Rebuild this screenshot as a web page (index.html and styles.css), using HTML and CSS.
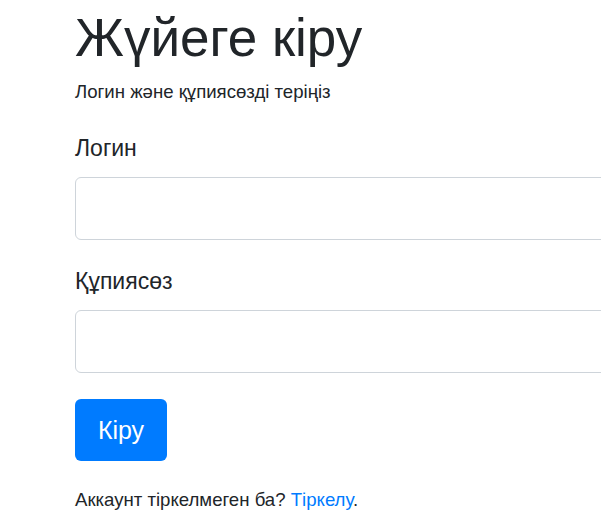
FILE: index.html
```html
<!DOCTYPE html>
<html lang="kk">
<head>
<meta charset="utf-8">
<title>Жүйеге кіру</title>
<link rel="stylesheet" href="styles.css">
</head>
<body>
<main class="login">
  <h1 class="login-title">Жүйеге кіру</h1>
  <p class="login-lead">Логин және құпиясөзді теріңіз</p>
  <form class="login-form">
    <div class="field">
      <label class="field-label" for="login">Логин</label>
      <input class="field-input" id="login" type="text">
    </div>
    <div class="field">
      <label class="field-label" for="password">Құпиясөз</label>
      <input class="field-input" id="password" type="password">
    </div>
    <button class="btn-primary" type="submit">Кіру</button>
  </form>
  <p class="login-note">Аккаунт тіркелмеген ба? <a class="link" href="#">Тіркелу</a>.</p>
</main>
</body>
</html>
```
FILE: styles.css
```css
html, body {
  margin: 0;
  padding: 0;
  background: #ffffff;
  overflow: hidden;
}

body {
  font-family: "Liberation Sans", Arial, sans-serif;
  color: #212529;
}

.login {
  width: 640px;
  padding-left: 75px;
}

.login-title {
  margin: 6px 0 8px;
  font-size: 53px;
  font-weight: 400;
  line-height: 64px;
}

.login-lead {
  margin: 0 0 28px;
  font-size: 18.6px;
  line-height: 27px;
}

.login-form {
  display: flex;
  flex-direction: column;
  align-items: flex-start;
}

.field {
  display: flex;
  flex-direction: column;
  width: 100%;
  margin-bottom: 26px;
}

.field-label {
  font-size: 23px;
  line-height: 31px;
  margin-bottom: 13px;
}

.field-input {
  box-sizing: border-box;
  width: 100%;
  height: 63px;
  border: 1px solid #ced4da;
  border-radius: 6px;
  background: #fff;
  font: inherit;
  padding: 0 16px;
}

.btn-primary {
  box-sizing: border-box;
  width: 92px;
  height: 62px;
  border: 0;
  border-radius: 6px;
  background: #007bff;
  color: #fff;
  font-family: inherit;
  font-size: 25px;
  line-height: 1;
  padding: 0;
}

.login-note {
  margin: 25px 0 0;
  font-size: 18.6px;
  line-height: 28px;
}

.link {
  color: #007bff;
  text-decoration: none;
}
```
